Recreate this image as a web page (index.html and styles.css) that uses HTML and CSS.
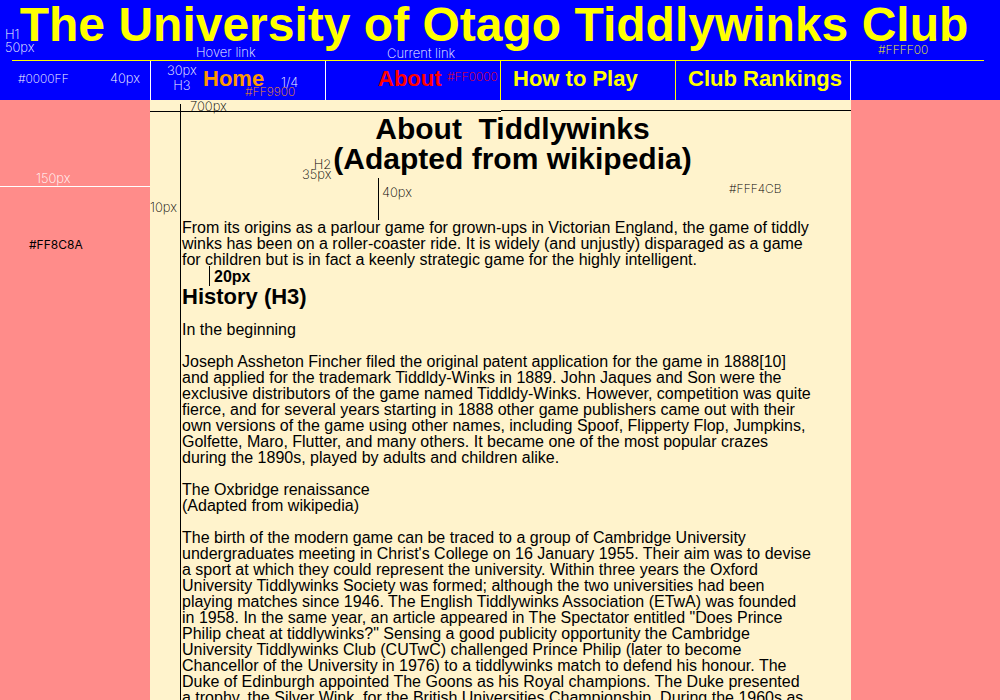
FILE: index.html
```
<!DOCTYPE html>
<html lang="en">
<head>
<meta charset="utf-8">
<title>The University of Otago Tiddlywinks Club</title>
<link rel="stylesheet" href="styles.css">
</head>
<body>
<header class="banner">
  <h1 class="club-name">The University of Otago Tiddlywinks Club</h1>
  <nav class="menu">
    <a class="menu-link hover" href="#home">Home</a>
    <a class="menu-link current" href="#about">About</a>
    <a class="menu-link" href="#play">How to Play</a>
    <a class="menu-link" href="#rankings">Club Rankings</a>
  </nav>
  <span class="note on-blue n-h1">H1<br>50px</span>
  <span class="note hex on-blue n-blue">#0000FF</span>
  <span class="note on-blue n-nav-height">40px</span>
  <span class="note on-blue n-hover">Hover link</span>
  <span class="note on-blue n-current">Current link</span>
  <span class="note on-blue n-h3">30px<br>H3</span>
  <span class="note on-blue n-quarter">1/4</span>
  <span class="note hex n-orange">#FF9900</span>
  <span class="note hex n-red">#FF0000</span>
  <span class="note hex n-yellow">#FFFF00</span>
</header>
<div class="page">
  <aside class="rail">
    <span class="note rail-width">150px</span>
    <span class="note hex rail-colour">#FF8C8A</span>
  </aside>
  <main class="article">
    <div class="width-rule"><span></span><span></span></div>
    <h2 class="heading">About &nbsp;Tiddlywinks<br>(Adapted from wikipedia)</h2>
    <p>From its origins as a parlour game for grown-ups in Victorian England, the game of tiddly<br>winks has been on a roller-coaster ride. It is widely (and unjustly) disparaged as a game<br>for children but is in fact a keenly strategic game for the highly intelligent.</p>
    <div class="gap-label">20px</div>
    <h3 class="subheading">History (H3)</h3>
    <p>In the beginning</p>
    <p>Joseph Assheton Fincher filed the original patent application for the game in 1888[10]<br>and applied for the trademark Tiddldy-Winks in 1889. John Jaques and Son were the<br>exclusive distributors of the game named Tiddldy-Winks. However, competition was quite<br>fierce, and for several years starting in 1888 other game publishers came out with their<br>own versions of the game using other names, including Spoof, Flipperty Flop, Jumpkins,<br>Golfette, Maro, Flutter, and many others. It became one of the most popular crazes<br>during the 1890s, played by adults and children alike.</p>
    <p>The Oxbridge renaissance<br>(Adapted from wikipedia)</p>
    <p>The birth of the modern game can be traced to a group of Cambridge University<br>undergraduates meeting in Christ's College on 16 January 1955. Their aim was to devise<br>a sport at which they could represent the university. Within three years the Oxford<br>University Tiddlywinks Society was formed; although the two universities had been<br>playing matches since 1946. The English Tiddlywinks Association (ETwA) was founded<br>in 1958. In the same year, an article appeared in The Spectator entitled "Does Prince<br>Philip cheat at tiddlywinks?" Sensing a good publicity opportunity the Cambridge<br>University Tiddlywinks Club (CUTwC) challenged Prince Philip (later to become<br>Chancellor of the University in 1976) to a tiddlywinks match to defend his honour. The<br>Duke of Edinburgh appointed The Goons as his Royal champions. The Duke presented<br>a trophy, the Silver Wink, for the British Universities Championship. During the 1960s as</p>
    <span class="note n-width">700px</span>
    <span class="note n-h2">H2<br>35px</span>
    <span class="note n-heading-gap">40px</span>
    <span class="note hex n-cream">#FFF4CB</span>
    <span class="note n-indent">10px</span>
  </main>
</div>
</body>
</html>
```
FILE: styles.css
```
* { box-sizing: border-box; }

body {
  margin: 0;
  height: 100vh;
  overflow: hidden;
  display: flex;
  flex-direction: column;
  background: #ff8c8a;
  color: #000;
  font: 16px/16px "Liberation Sans", Arial, sans-serif;
}

/* Banner and menu */
.banner {
  position: relative;
  flex: none;
  background: #00f;
}

.club-name {
  margin: 0 16px 0 12px;
  padding: 0 8px 10px 0;
  border-bottom: 1px solid #ff0;
  color: #ff0;
  font-size: 48px;
  line-height: 50px;
  text-align: center;
  white-space: nowrap;
}

.menu {
  display: grid;
  grid-template-columns: repeat(4, 1fr);
  margin: 0 149px 0 150px;
  border-right: 1px solid #fff;
}

.menu-link {
  padding-left: 12px;
  padding-bottom: 3px;
  border-left: 1px solid #ff0;
  color: #ff0;
  font-size: 22px;
  font-weight: bold;
  line-height: 36px;
  text-decoration: none;
  white-space: nowrap;
}

.menu-link.hover,
.menu-link.current {
  padding-left: 52px;
  border-left-color: #fff;
}

.menu-link.hover { color: #f90; }
.menu-link.current { color: #f00; }

/* Page columns */
.page {
  flex: 1;
  min-height: 0;
  display: grid;
  grid-template-columns: 150px 1fr 149px;
}

.rail { position: relative; }

.article {
  position: relative;
  padding: 14px 8px 0 32px;
  background: #fff3cc;
}

.article::before {
  content: "";
  position: absolute;
  left: 30px;
  top: 4px;
  bottom: 2px;
  border-left: 1px solid #000;
}

.article p {
  margin: 0 0 16px;
  white-space: nowrap;
}

.heading {
  margin: 0 0 46px;
  font-size: 30px;
  line-height: 30px;
  text-align: center;
}

.heading + p { margin: 0; }

.subheading {
  margin: 0 0 14px;
  font-size: 22px;
  line-height: 22px;
}

.gap-label {
  position: relative;
  padding-left: 32px;
  font-weight: bold;
  line-height: 18px;
}

.gap-label::before {
  content: "";
  position: absolute;
  left: 27px;
  top: -2px;
  height: 20px;
  border-left: 1px solid #000;
}

/* Dimension line across the article, in two offset halves */
.width-rule {
  position: absolute;
  left: 0;
  right: 0;
  top: 10px;
  display: flex;
}

.width-rule span {
  flex: 1;
  height: 2px;
  border-top: 1px solid #000;
}

.width-rule span:first-child {
  border-top: 0;
  border-bottom: 1px solid #000;
}

/* Design notes laid over the page */
.note {
  position: absolute;
  color: #000;
  font: 200 13px/16px Inter, "Liberation Sans", sans-serif;
  white-space: nowrap;
}

.note.hex { font-size: 12px; }
.note.on-blue { color: #fff; }

.note.rail-width {
  left: 0;
  right: 0;
  top: 70px;
  padding-left: 36px;
  border-bottom: 1px solid #fff;
  color: #fff;
}

.note.rail-colour {
  left: 29px;
  top: 137px;
  font-weight: 400;
}

.note.n-h1 { left: 5px; top: 28px; line-height: 13px; }
.n-blue { left: 18px; top: 71px; }
.n-nav-height { left: 110px; top: 70px; }
.n-hover { left: 196px; top: 44px; }
.n-current { left: 387px; top: 45px; }
.note.n-h3 { left: 167px; top: 63px; line-height: 15px; text-align: center; }
.n-quarter { left: 281px; top: 74px; }
.note.n-orange { left: 245px; top: 84px; color: #f90; }
.note.n-red { left: 447px; top: 69px; color: #f00; }
.note.n-yellow { left: 878px; top: 42px; color: #ff0; }

.n-width { left: 40px; top: -2px; }
.note.n-h2 { left: 152px; top: 59px; line-height: 10px; text-align: right; }
.n-heading-gap { left: 232px; top: 84px; }
.n-cream { left: 579px; top: 81px; }
.n-indent { left: 0; top: 99px; }

.n-heading-gap::before {
  content: "";
  position: absolute;
  left: -4px;
  top: -6px;
  height: 42px;
  border-left: 1px solid #000;
}
```
